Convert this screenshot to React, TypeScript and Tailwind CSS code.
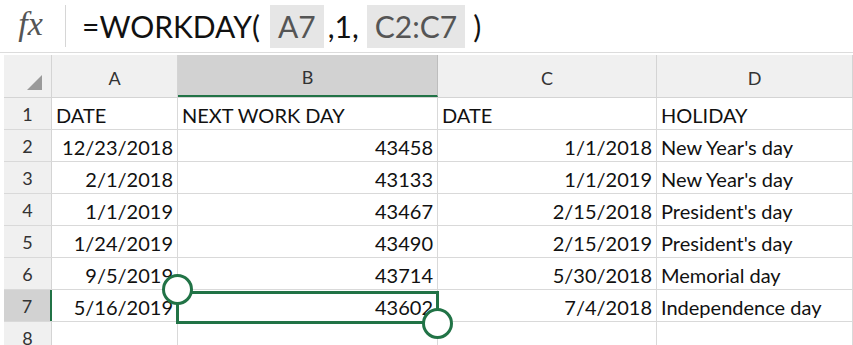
const cols = [
  { key: "A", w: "w-[126px]" },
  { key: "B", w: "w-[260px]" },
  { key: "C", w: "w-[219px]" },
  { key: "D", w: "flex-1" },
]

const rows: [string, string, string, string][] = [
  ["DATE", "NEXT WORK DAY", "DATE", "HOLIDAY"],
  ["12/23/2018", "43458", "1/1/2018", "New Year's day"],
  ["2/1/2018", "43133", "1/1/2019", "New Year's day"],
  ["1/1/2019", "43467", "2/15/2018", "President's day"],
  ["1/24/2019", "43490", "2/15/2019", "President's day"],
  ["9/5/2019", "43714", "5/30/2018", "Memorial day"],
  ["5/16/2019", "43602", "7/4/2018", "Independence day"],
  ["", "", "", ""],
]

export default function App() {
  return (
    <div className="h-[345px] w-[853px] overflow-hidden bg-white font-['Lato',sans-serif] text-[#111]">
      {/* formula bar */}
      <div className="flex h-[53px] border-b border-[#dcdcdc]">
        <div className="my-[5px] flex w-[66px] items-center justify-center border-r border-[#d6d6d6] pb-1 pr-1">
          <span className="font-['Liberation_Serif',serif] text-[34px] italic leading-none text-[#555]">fx</span>
        </div>
        <div className="flex items-center pl-4 text-[30px] leading-none">
          <span>=WORKDAY(</span>
          <span className="ml-[10px] flex h-[43px] items-center bg-[#e6e6e6] px-2 text-[#555]">A7</span>
          <span className="ml-1">,1,</span>
          <span className="ml-2 flex h-[43px] items-center bg-[#e6e6e6] px-2 text-[#555]">C2:C7</span>
          <span className="ml-2">)</span>
        </div>
      </div>

      {/* grid */}
      <div className="relative mt-[2px] pl-1">
        <div className="flex h-[43px] border-b border-[#d4d4d4] bg-[#f0f0f0]">
          <div className="relative w-[48px] border-r border-[#d4d4d4]">
            <svg className="absolute bottom-[7px] right-[9px]" width="15" height="15" viewBox="0 0 15 15">
              <path d="M15 0 L15 15 L0 15 Z" fill="#9a9a9a" />
            </svg>
          </div>
          {cols.map((c) => (
            <div
              key={c.key}
              className={`${c.w} flex items-center justify-center border-r pt-1 text-[18px] text-[#333] ${
                c.key === "B"
                  ? "border-[#bdbdbd] border-b-2 border-b-[#217346] bg-[#d2d2d2]"
                  : "border-[#d4d4d4]"
              }`}
            >
              {c.key}
            </div>
          ))}
        </div>

        {rows.map((r, i) => {
          const n = i + 1
          const active = n === 7
          return (
            <div key={n} className="flex h-8 border-b border-[#d9d9d9] text-[20px] leading-[24px]">
              <div
                className={`flex w-[48px] items-end justify-center pb-[3px] text-[18px] text-[#333] ${
                  active
                    ? "border-r-2 border-[#217346] bg-[#d2d2d2]"
                    : "border-r border-[#d4d4d4] bg-[#f0f0f0]"
                }`}
              >
                {n}
              </div>
              {r.map((v, j) => {
                const right = n > 1 && j < 3
                return (
                  <div
                    key={j}
                    className={`${cols[j].w} flex items-end overflow-visible whitespace-nowrap border-r border-[#d9d9d9] pb-[2px] ${
                      right ? "justify-end pr-1" : "pl-1"
                    }`}
                  >
                    {v}
                  </div>
                )
              })}
            </div>
          )
        })}

        {/* selection B7 */}
        <div className="pointer-events-none absolute left-[176px] top-[236px] h-[33px] w-[263px] border-[3px] border-[#217346]" />
        <div className="absolute left-[162px] top-[219px] h-[31px] w-[31px] rounded-full border-[3px] border-[#217346] bg-white" />
        <div className="absolute left-[422px] top-[253px] h-[31px] w-[31px] rounded-full border-[3px] border-[#217346] bg-white" />
      </div>
    </div>
  )
}
